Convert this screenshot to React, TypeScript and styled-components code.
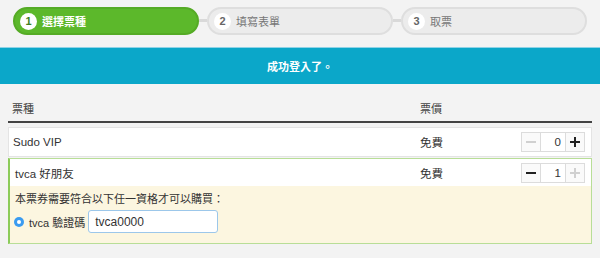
import React from "react";
import styled, { createGlobalStyle } from "styled-components";

const Global = createGlobalStyle`
  html, body { margin: 0; padding: 0; background: #f3f3f3; }
  body { font-family: "Liberation Sans", "Noto Sans CJK TC", sans-serif; font-size: 11px; color: #333; }
  * { box-sizing: border-box; }
`;

const Steps = styled.div`
  display: flex;
  align-items: flex-start;
  padding: 7px 0 0 13px;
  height: 47px;
`;

const Step = styled.div<{ $active?: boolean }>`
  width: 186px;
  height: 28px;
  border-radius: 14px;
  border: 2px solid ${(p) => (p.$active ? "#55ab25" : "#dedede")};
  background: ${(p) => (p.$active ? "#5cb82b" : "#ececec")};
  display: flex;
  align-items: center;
  padding-left: 5px;
  gap: 5px;
  color: ${(p) => (p.$active ? "#fff" : "#777")};
  font-weight: ${(p) => (p.$active ? "bold" : "normal")};
  font-size: 11px;
`;

const StepNum = styled.span<{ $active?: boolean }>`
  width: 17px;
  height: 17px;
  border-radius: 50%;
  background: #fff;
  color: ${(p) => (p.$active ? "#3f7f1d" : "#666")};
  font-size: 11px;
  font-weight: bold;
  display: flex;
  align-items: center;
  justify-content: center;
`;

const Connector = styled.div`
  width: 8px;
  height: 3px;
  margin-top: 12px;
  background: #d9d9d9;
`;

const Banner = styled.div`
  border-top: 1px solid #8fd3e6;
  background: #0ba7c9;
  height: 37px;
  display: flex;
  align-items: center;
  justify-content: center;
  color: #fff;
  font-weight: bold;
  font-size: 11px;
`;

const Table = styled.div`
  padding: 0 8px;
`;

const HeadRow = styled.div`
  display: grid;
  grid-template-columns: 1fr 95px 70px;
  height: 39px;
  align-items: end;
  padding: 0 7px 5px 4px;
  border-bottom: 2px solid #444;
  color: #444;
`;

const TicketRow = styled.div<{ $selected?: boolean }>`
  margin-top: ${(p) => (p.$selected ? "1px" : "4px")};
  background: #fff;
  border: 1px solid ${(p) => (p.$selected ? "#b8de97" : "#e4e4e4")};
  border-left: ${(p) => (p.$selected ? "2px solid #8ccb5a" : "1px solid #e4e4e4")};
`;

const RowMain = styled.div<{ $selected?: boolean }>`
  display: grid;
  grid-template-columns: 1fr 95px 70px;
  align-items: center;
  height: ${(p) => (p.$selected ? "27px" : "28px")};
  padding: 0 6px 0 ${(p) => (p.$selected ? "5px" : "4px")};
  color: #333;
  font-size: 11.5px;
`;

const Stepper = styled.div`
  display: flex;
  height: 20px;
  justify-self: end;
`;

const StepBtn = styled.div<{ $enabled?: boolean }>`
  width: 20px;
  height: 20px;
  border: 1px solid #dcdcdc;
  background: #fafafa;
  display: flex;
  align-items: center;
  justify-content: center;
  color: ${(p) => (p.$enabled ? "#222" : "#d0d0d0")};
`;

const StepVal = styled.div`
  width: 24px;
  height: 20px;
  border-top: 1px solid #dcdcdc;
  border-bottom: 1px solid #dcdcdc;
  background: #fff;
  display: flex;
  align-items: center;
  justify-content: flex-end;
  padding-right: 4px;
  color: #333;
`;

const Requirement = styled.div`
  background: #fcf6e0;
  padding: 4px 5px 10px 5px;
  color: #333;
`;

const ReqTitle = styled.div`
  height: 16px;
  display: flex;
  align-items: center;
`;

const ReqOption = styled.div`
  display: flex;
  align-items: center;
  margin-top: 4px;
  gap: 5px;
  margin-left: -1px;
`;

const Radio = styled.span`
  width: 10px;
  height: 10px;
  border-radius: 50%;
  background: #3a9bf0;
  display: flex;
  align-items: center;
  justify-content: center;
  &::after {
    content: "";
    width: 4px;
    height: 4px;
    border-radius: 50%;
    background: #fff;
  }
`;

const Input = styled.div`
  width: 130px;
  height: 23px;
  margin-left: -2px;
  border: 1px solid #9cc7ea;
  border-radius: 3px;
  background: #fff;
  display: flex;
  align-items: center;
  padding-left: 6px;
  color: #333;
  font-size: 12px;
`;

const Minus = () => (
  <svg width="10" height="10" viewBox="0 0 10 10"><rect x="0" y="4" width="10" height="2" fill="currentColor" /></svg>
);
const Plus = () => (
  <svg width="10" height="10" viewBox="0 0 10 10"><rect x="0" y="4" width="10" height="2" fill="currentColor" /><rect x="4" y="0" width="2" height="10" fill="currentColor" /></svg>
);

export default function App() {
  return (
    <>
      <Global />
      <Steps>
        <Step $active><StepNum $active>1</StepNum>選擇票種</Step>
        <Connector />
        <Step><StepNum>2</StepNum>填寫表單</Step>
        <Connector />
        <Step><StepNum>3</StepNum>取票</Step>
      </Steps>
      <Banner>成功登入了。</Banner>
      <Table>
        <HeadRow><span>票種</span><span>票價</span></HeadRow>
        <TicketRow>
          <RowMain>
            <span>Sudo VIP</span>
            <span>免費</span>
            <Stepper>
              <StepBtn><Minus /></StepBtn>
              <StepVal>0</StepVal>
              <StepBtn $enabled><Plus /></StepBtn>
            </Stepper>
          </RowMain>
        </TicketRow>
        <TicketRow $selected>
          <RowMain $selected>
            <span>tvca 好朋友</span>
            <span>免費</span>
            <Stepper>
              <StepBtn $enabled><Minus /></StepBtn>
              <StepVal>1</StepVal>
              <StepBtn><Plus /></StepBtn>
            </Stepper>
          </RowMain>
          <Requirement>
            <ReqTitle>本票券需要符合以下任一資格才可以購買：</ReqTitle>
            <ReqOption>
              <Radio />
              <span>tvca 驗證碼</span>
              <Input>tvca0000</Input>
            </ReqOption>
          </Requirement>
        </TicketRow>
      </Table>
    </>
  );
}
